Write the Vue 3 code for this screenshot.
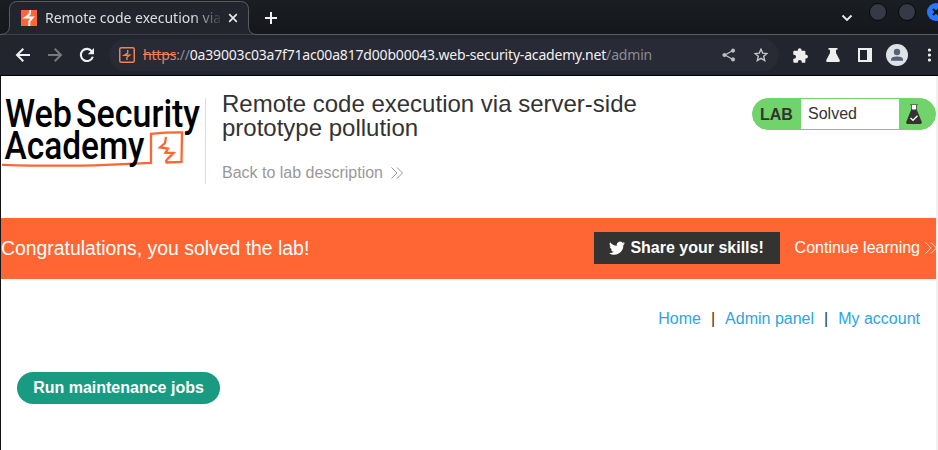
<script setup>
const links = ['Home', 'Admin panel', 'My account']
</script>

<template>
  <div class="window">
    <header class="tabstrip">
      <svg class="outline" width="938" height="35" viewBox="0 0 938 35">
        <path d="M0 35V34.5Q9.500 34.500 9.500 26V9.500Q9.500 1.500 17.500 1.500H240.500Q248.500 1.500 248.500 9.500V26Q248.500 34.500 257 34.500H938V35Z" fill="#23252e" stroke="#5b5c63" />
      </svg>
      <div class="tab">
        <svg width="16" height="16" viewBox="0 0 16 16">
          <path fill="#ff6633" d="M0 0h16v16H0z" />
          <path d="M9.200 0L8.600 4.200 4.300 7.600H11.500L8.300 11.300V16" fill="none" stroke="#fff" stroke-width="2" />
        </svg>
        <span class="tab-title">Remote code execution via</span>
        <svg class="close" width="10" height="10" viewBox="0 0 10 10"><path d="M1.200 1.200l7.600 7.600M8.800 1.200L1.200 8.800" stroke="#e8e8e8" stroke-width="1.700" /></svg>
      </div>
      <svg class="plus" width="12" height="12" viewBox="0 0 12 12"><path d="M6 0v12M0 6h12" stroke="#f2f2f2" stroke-width="2" /></svg>
      <div class="controls">
        <svg class="chev" width="12" height="8" viewBox="0 0 12 8"><path d="M1.500 1.500L6 6l4.500-4.500" fill="none" stroke="#eee" stroke-width="1.800" /></svg>
        <i class="dot" /><i class="dot" />
        <i class="dot blue"><svg width="8" height="8" viewBox="0 0 8 8"><path d="M1 1l6 6M7 1L1 7" stroke="#10131c" stroke-width="2.200" /></svg></i>
      </div>
    </header>

    <div class="toolbar">
      <svg class="back" width="16" height="16" viewBox="0 0 16 16"><path d="M16 8H3M9.300 1.700L3 8l6.300 6.300" fill="none" stroke="#f1f1f1" stroke-width="2" /></svg>
      <svg class="forward" width="16" height="16" viewBox="0 0 16 16"><path d="M1 8h13M7.700 1.700L14 8l-6.300 6.300" fill="none" stroke="#77787d" stroke-width="2" /></svg>
      <svg class="reload" width="16" height="16" viewBox="0 0 16 16"><path d="M13 4.500A6.100 6.100 0 1 0 13.800 9.700" fill="none" stroke="#f1f1f1" stroke-width="2.100" /><path d="M15 1v6.200H8.800z" fill="#f1f1f1" /></svg>
      <div class="omnibox">
        <svg width="16" height="16" viewBox="0 0 16 16"><rect x=".75" y=".75" width="14.500" height="14.500" rx="1.500" fill="none" stroke="#f18055" stroke-width="1.500" /><path d="M8.700 3V6L5.200 8.300h5.400L7.900 10.300v2.700" fill="none" stroke="#f18055" stroke-width="1.400" /></svg>
        <span class="url"><span class="scheme">https</span><span class="muted">://</span>0a39003c03a7f71ac00a817d00b00043.web-security-academy.net<span class="muted">/admin</span></span>
        <svg class="share" width="14" height="14" viewBox="0 0 14 14" fill="#bfc0c3" stroke="#bfc0c3"><path d="M11 2.500L3 7l8 4.500" fill="none" stroke-width="1.300" /><circle cx="11" cy="2.600" r="1.600" /><circle cx="2.500" cy="7" r="1.600" /><circle cx="11" cy="11.400" r="1.600" /></svg>
        <svg class="star" width="14" height="14" viewBox="0 0 14 14"><path d="M7 1.200l1.700 3.900 4.200.4-3.200 2.800 1 4.200L7 10.300l-3.700 2.200 1-4.200L1.100 5.500l4.200-.4z" fill="none" stroke="#c4c5c8" stroke-width="1.400" /></svg>
      </div>
      <svg class="puzzle" width="15" height="15" viewBox="0 0 15 15"><path fill="#eee" d="M1.300 2.700h3.500v-.5a1.900 1.900 0 0 1 3.800 0v.5h2.800q1 0 1 1v3h.7a1.850 1.850 0 0 1 0 3.700h-.7v3.300q0 1-1 1H8.800V14a2 2 0 0 0-4 0v.7H1.300q-1 0-1-1v-3H1a2 2 0 0 0 0-4H.3v-3q0-1 1-1z" /></svg>
      <svg class="flask" width="14" height="14" viewBox="0 0 14 14"><path fill="#eee" d="M2.500 0h9v1.700H10V5l3.800 7.200Q14.200 14 12.500 14h-11Q-.2 14 .2 12.200L4 5V1.700H2.500z" /></svg>
      <svg class="panel" width="14" height="14" viewBox="0 0 14 14"><path fill="#eee" fill-rule="evenodd" d="M0 0h14v14H0zM2 2v10h7V2z" /></svg>
      <svg class="avatar" width="22" height="22" viewBox="0 0 22 22"><circle cx="11" cy="11" r="11" fill="#dee1e6" /><circle cx="11" cy="8" r="3.200" fill="#556174" /><path d="M5 16.800v-1.300q0-3 6-3t6 3v1.300z" fill="#556174" /></svg>
      <svg class="more" width="4" height="14" viewBox="0 0 4 14" fill="#eee"><circle cx="1.500" cy="2" r="1.600" /><circle cx="1.500" cy="7" r="1.600" /><circle cx="1.500" cy="12" r="1.600" /></svg>
    </div>

    <main class="page">
      <section class="lab-header">
        <svg class="logo" width="204" height="86" viewBox="0 0 204 86">
          <path d="M1 66.800Q60 68.600 105 66.800L150 64.900V35.800Q166 34.200 181 34.400L180.500 64 164.500 64.500" fill="none" stroke="#ff6633" stroke-width="2.300" />
          <path d="M165 39l-1 6-5 4.500 8 1.200-2.500 4 8 .3-6 6-2 3" fill="none" stroke="#ff6633" stroke-width="2.300" />
          <g class="logo-text">
            <text x="4" y="28.500" textLength="67" lengthAdjust="spacingAndGlyphs">Web</text>
            <text x="75" y="28.500" textLength="124" lengthAdjust="spacingAndGlyphs">Security</text>
            <text x="3.500" y="61" textLength="140" lengthAdjust="spacingAndGlyphs">Academy</text>
          </g>
        </svg>
        <div class="title-block">
          <h2>Remote code execution via server-side prototype pollution</h2>
          <a class="back-link">Back to lab description
            <svg width="12" height="12" viewBox="0 0 12 12"><path d="M.5.500L6 6 .5 11.500M6 .5L11.500 6 6 11.500" fill="none" stroke="#999" /></svg>
          </a>
        </div>
        <div class="status">
          <b>LAB</b><span>Solved</span>
          <svg width="16" height="20" viewBox="0 0 16 20"><path d="M4 .5h8" stroke="#5c765a" /><path d="M6 1h4v5H6z" fill="#fff" /><path d="M5.500 1v5M10.500 1v5" stroke="#4d6d4b" /><path d="M5.300 5.500h5.400L15.800 18q.3 2-1.400 2H1.600Q-.1 20 .2 18z" fill="#333332" /><path d="M4.500 14l2.500 2.300 4.500-4.600" fill="none" stroke="#fff" stroke-width="1.300" /></svg>
        </div>
      </section>

      <section class="banner">
        <h4>Congratulations, you solved the lab!</h4>
        <a class="tweet"><svg width="16" height="14" viewBox="0 1.500 24 20.500"><path fill="#fff" d="M24 4.600a10 10 0 0 1-2.800.8 5 5 0 0 0 2.100-2.700 10 10 0 0 1-3.100 1.200 4.900 4.900 0 0 0-8.400 4.500A14 14 0 0 1 1.700 3.200a4.900 4.900 0 0 0 1.500 6.500A5 5 0 0 1 1 9.100v.1a4.900 4.900 0 0 0 3.900 4.800 5 5 0 0 1-2.200.1 4.900 4.900 0 0 0 4.600 3.400A9.900 9.900 0 0 1 0 19.500a14 14 0 0 0 21.500-12.400A10 10 0 0 0 24 4.600z" /></svg>Share your skills!</a>
        <a class="continue">Continue learning <svg width="12" height="12" viewBox="0 0 12 12"><path d="M.5.500L6 6 .5 11.500M6 .5L11.500 6 6 11.500" fill="none" stroke="#ffd2c2" /></svg></a>
      </section>

      <nav>
        <template v-for="(link, i) in links" :key="link">
          <span v-if="i">|</span><a>{{ link }}</a>
        </template>
      </nav>
      <button>Run maintenance jobs</button>
    </main>
  </div>
</template>

<style>
body { margin: 0; overflow: hidden; }
</style>

<style scoped>
* { box-sizing: border-box; }
svg { display: block; flex: none; }
.window { width: 938px; height: 450px; background: #121419; overflow: hidden; }
.tabstrip { position: relative; display: flex; height: 35px; background: linear-gradient(#1a1d22, #15171c); font-family: "Noto Sans", sans-serif; }
.outline { position: absolute; left: 0; top: 0; }
.tab { position: relative; display: flex; align-items: center; width: 240px; height: 34px; margin-left: 9px; padding: 2px 11px 0 12px; }
.tab-title { width: 177px; margin-left: 8px; overflow: hidden; white-space: nowrap; font-size: 14px; line-height: 20px; color: #dedee0; -webkit-mask-image: linear-gradient(90deg, #000 148px, transparent 178px); mask-image: linear-gradient(90deg, #000 148px, transparent 178px); }
.close { margin-left: 6px; }
.plus { position: relative; margin: 12px 0 0 16px; }
.controls { position: relative; display: flex; margin-left: auto; height: 24px; align-items: center; }
.chev { margin: 12px 16px 0 0; }
.dot { flex: none; width: 18px; height: 18px; margin-right: 11px; border-radius: 50%; background: #363a46; border: 1px solid #07080b; }
.dot.blue { display: flex; align-items: center; justify-content: center; margin-right: -7px; background: #2878f5; border: 0; }
.toolbar { display: flex; align-items: center; height: 41px; padding-left: 14px; background: #23252e; border-bottom: 1px solid #020204; }
.forward { margin-left: 17px; }
.reload { margin-left: 16px; }
.omnibox { display: flex; align-items: center; width: 670px; height: 32px; margin-left: 14px; padding: 0 11px 0 10px; border-radius: 16px; background: #282a35; }
.url { margin-left: 8px; font: 14px/20px "Noto Sans", sans-serif; letter-spacing: -.185px; color: #f0f0f2; white-space: nowrap; }
.scheme { color: #f18055; text-decoration: line-through; }
.muted { color: #8b8d94; }
.share { margin-left: auto; }
.star { margin-left: 18px; }
.puzzle { margin-left: 14px; }
.flask { margin-left: 18px; }
.panel { margin-left: 18px; }
.avatar { margin-left: 14px; }
.more { margin-left: 20px; }
.page { display: flex; flex-direction: column; width: 937px; height: 374px; margin-left: 1px; border-right: 2px solid #f1f1f1; background: #fff; color: #333332; font: 16px/20px "Liberation Sans", Arial, sans-serif; }
.lab-header { display: flex; height: 142px; padding-top: 22px; }
.logo { width: 205px; height: 86px; border-right: 1px solid #ddd; overflow: visible; }
.logo-text { font-family: Roboto, sans-serif; font-size: 38px; font-weight: 500; fill: #000; }
.title-block { width: 440px; margin-left: 16px; }
h2 { margin: -6px 0 0; font-size: 24px; line-height: 24px; font-weight: 400; }
.back-link { display: flex; gap: 8px; align-items: center; margin-top: 23px; color: #999; }
.status { display: flex; width: 184px; height: 32px; margin-left: auto; border: 1px solid #70d46b; border-radius: 16px; background: #70d46b; align-items: center; }
.status b { width: 48px; padding: 2px 0 0 7px; }
.status span { width: 98px; height: 30px; padding-left: 7px; line-height: 30px; background: #fff; }
.status svg { margin-left: 7px; }
.banner { display: flex; align-items: center; height: 61px; flex: none; padding-bottom: 1px; background: #ff6633; color: #fff; white-space: nowrap; }
h4 { margin: 0 auto 0 0; font-size: 19.400px; font-weight: 400; }
.tweet { display: flex; align-items: center; justify-content: center; gap: 5px; width: 186px; height: 32px; margin-right: 15px; background: #333332; font-weight: 700; }
.continue { display: flex; align-items: center; gap: 5px; margin-right: -1px; }
nav { display: flex; justify-content: flex-end; gap: 10px; padding: 30px 16px 0 0; }
nav a { color: #29a7de; }
button { align-self: flex-start; width: 203px; height: 32px; margin: 43px 0 0 16px; padding: 0; border: 0; border-radius: 16px; background: #189b80; color: #fff; font: 700 16px "Liberation Sans", Arial, sans-serif; }
</style>
